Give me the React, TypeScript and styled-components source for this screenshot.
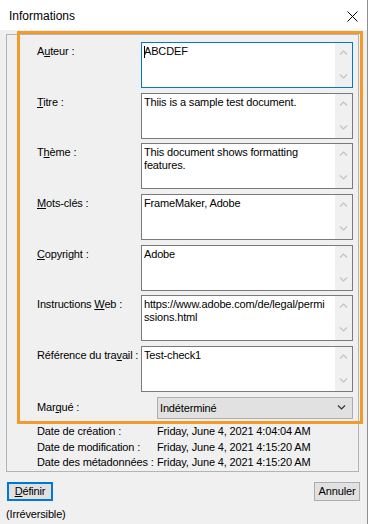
import React from 'react'
import styled, { createGlobalStyle } from 'styled-components'

const GlobalStyle = createGlobalStyle`
    html, body {
        margin: 0;
        padding: 0;
        background: #f0f0f0;
    }
    body {
        font-family: 'Liberation Sans', Arial, sans-serif;
    }
`

const Window = styled.div`
    width: 368px;
    height: 524px;
    box-sizing: border-box;
    display: flex;
    flex-direction: column;
    background: #f0f0f0;
    border-right: 1px solid #8f8f8f;
    font-family: 'Liberation Sans', Arial, sans-serif;
    font-size: 11px;
    letter-spacing: -0.15px;
    color: #000;
    overflow: hidden;
`

const TitleBar = styled.div`
    height: 30px;
    flex: none;
    box-sizing: border-box;
    display: flex;
    align-items: center;
    justify-content: space-between;
    padding: 2px 9px 0 9px;
    background: #fff;
`

const Title = styled.span`
    font-size: 12px;
    line-height: 14px;
    letter-spacing: 0;
`

const Content = styled.div`
    padding: 4px 8px 0 6px;
`

const GroupBox = styled.div`
    border: 1px solid #b4b4b4;
    display: flex;
    flex-direction: column;
`

// orange annotation frame drawn over the editable fields
const Highlight = styled.div`
    margin: -4px -5px 0 10px;
    border: 3px solid #f39a2c;
    padding: 8px 7px 2px 17px;
    display: flex;
    flex-direction: column;
    gap: 4.67px;
    position: relative;
`

const FieldRow = styled.div`
    display: flex;
    height: 46px;
`

const Label = styled.div<{ $width?: number; $center?: boolean }>`
    width: ${(p) => p.$width ?? 104}px;
    flex: none;
    line-height: 13px;
    padding-top: ${(p) => (p.$center ? 0 : 3)}px;
    align-self: ${(p) => (p.$center ? 'center' : 'flex-start')};
    white-space: nowrap;
`

const Key = styled.span`
    text-decoration: underline;
    text-underline-offset: 1px;
`

const TextBox = styled.div<{ $focused?: boolean }>`
    flex: 1;
    box-sizing: border-box;
    display: flex;
    background: #fff;
    border: 1px solid ${(p) => (p.$focused ? '#0078d7' : '#7a7a7a')};
`

const TextContent = styled.div<{ $breakAll?: boolean }>`
    flex: 1;
    padding: 2px 7px 0 2px;
    line-height: 13px;
    word-break: ${(p) => (p.$breakAll ? 'break-all' : 'normal')};
    position: relative;
`

const Caret = styled.span`
    position: absolute;
    left: 2px;
    top: 3px;
    width: 1px;
    height: 12px;
    background: #000;
`

const ScrollBar = styled.div`
    width: 17px;
    flex: none;
    background: #f0f0f0;
    display: flex;
    flex-direction: column;
    align-items: center;
    justify-content: space-between;
    padding: 7px 0 8px;
    box-sizing: border-box;
`

const SelectRow = styled.div`
    display: flex;
    height: 22px;
    margin-top: 0.33px;
`

const Select = styled.div`
    flex: 1;
    box-sizing: border-box;
    display: flex;
    align-items: center;
    justify-content: space-between;
    padding: 0 6px 0 2px;
    background: #e1e1e1;
    border: 1px solid #adadad;
`

const Dates = styled.div`
    padding-left: 30px;
    display: grid;
    grid-template-columns: 120px 1fr;
    line-height: 15.67px;
    white-space: nowrap;
`

const Footer = styled.div`
    padding: 10px 7px 0 6px;
    display: flex;
    flex-direction: column;
`

const ButtonRow = styled.div`
    display: flex;
    justify-content: space-between;
    padding-left: 1px;
`

const Button = styled.div<{ $default?: boolean }>`
    width: 46px;
    height: 19px;
    box-sizing: border-box;
    display: flex;
    align-items: center;
    justify-content: center;
    background: #e1e1e1;
    border: ${(p) => (p.$default ? '2px solid #0078d7' : '1px solid #adadad')};
    line-height: 13px;
`

const Note = styled.div`
    margin-top: 7px;
    line-height: 13px;
`

const Chevron = ({ up, color = '#c2c2c2' }: { up?: boolean; color?: string }) => (
    <svg width="9" height="5" viewBox="0 0 9 5">
        <polyline
            points={up ? '1,4.5 4.5,1 8,4.5' : '1,0.5 4.5,4 8,0.5'}
            fill="none"
            stroke={color}
            strokeWidth="1.2"
        />
    </svg>
)

const CloseIcon = () => (
    <svg width="11" height="11" viewBox="0 0 11 11">
        <path d="M0.5 0.5 L10.5 10.5 M10.5 0.5 L0.5 10.5" stroke="#000" strokeWidth="1" />
    </svg>
)

interface Field {
    label: React.ReactNode
    value: string
    focused?: boolean
    breakAll?: boolean
}

const fields: Field[] = [
    { label: <>A<Key>u</Key>teur :</>, value: 'ABCDEF', focused: true },
    { label: <><Key>T</Key>itre :</>, value: 'Thiis is a sample test document.' },
    { label: <>T<Key>h</Key>ème :</>, value: 'This document shows formatting features.' },
    { label: <><Key>M</Key>ots-clés :</>, value: 'FrameMaker, Adobe' },
    { label: <><Key>C</Key>opyright :</>, value: 'Adobe' },
    {
        label: <>Instructions <Key>W</Key>eb :</>,
        value: 'https://www.adobe.com/de/legal/permissions.html',
        breakAll: true,
    },
    { label: <>Référence du tra<Key>v</Key>ail :</>, value: 'Test-check1' },
]

const dates = [
    ['Date de création :', 'Friday, June 4, 2021 4:04:04 AM'],
    ['Date de modification :', 'Friday, June 4, 2021 4:15:20 AM'],
    ['Date des métadonnées :', 'Friday, June 4, 2021 4:15:20 AM'],
]

export default function App() {
    return (
        <>
            <GlobalStyle />
            <Window>
                <TitleBar>
                    <Title>Informations</Title>
                    <CloseIcon />
                </TitleBar>
                <Content>
                    <GroupBox>
                        <Highlight>
                            {fields.map((f, i) => (
                                <FieldRow key={i}>
                                    <Label>{f.label}</Label>
                                    <TextBox $focused={f.focused}>
                                        <TextContent $breakAll={f.breakAll}>
                                            {f.focused && <Caret />}
                                            {f.value}
                                        </TextContent>
                                        <ScrollBar>
                                            <Chevron up />
                                            <Chevron />
                                        </ScrollBar>
                                    </TextBox>
                                </FieldRow>
                            ))}
                            <SelectRow>
                                <Label $width={120} $center>
                                    Mar<Key>q</Key>ué :
                                </Label>
                                <Select>
                                    <span>Indéterminé</span>
                                    <Chevron color="#333" />
                                </Select>
                            </SelectRow>
                        </Highlight>
                        <Dates>
                            {dates.map(([k, v]) => (
                                <React.Fragment key={k}>
                                    <span>{k}</span>
                                    <span>{v}</span>
                                </React.Fragment>
                            ))}
                        </Dates>
                    </GroupBox>
                </Content>
                <Footer>
                    <ButtonRow>
                        <Button $default>
                            <span>
                                <Key>D</Key>éfinir
                            </span>
                        </Button>
                        <Button>Annuler</Button>
                    </ButtonRow>
                    <Note>(Irréversible)</Note>
                </Footer>
            </Window>
        </>
    )
}
